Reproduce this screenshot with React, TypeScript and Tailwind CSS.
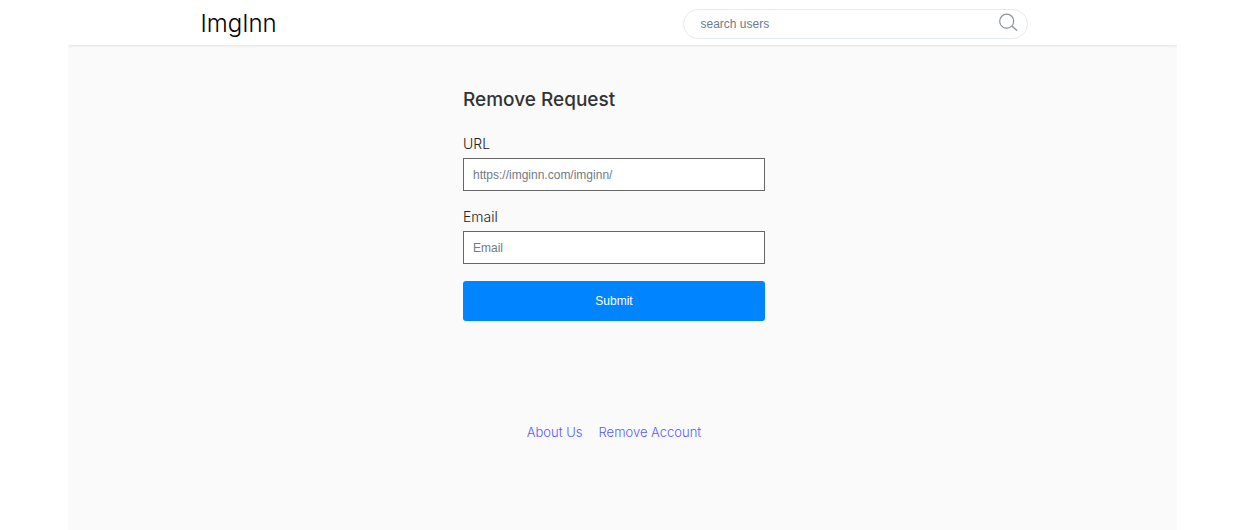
import { useState } from 'react';
import type { FormEvent } from 'react';

interface FieldProps {
  id: string;
  label: string;
  type: string;
  placeholder: string;
  value: string;
  onChange: (value: string) => void;
}

const footerLinks = [
  { label: 'About Us', href: '#about' },
  { label: 'Remove Account', href: '#remove' },
];

function SearchIcon() {
  return (
    <svg width="20" height="20" viewBox="0 0 20 20" fill="none" stroke="#8b9298" aria-hidden="true">
      <circle cx="8.7" cy="8.2" r="7" strokeWidth="1.2" />
      <path d="M14 13.3L19 17.5" strokeWidth="1.5" />
    </svg>
  );
}

function Header() {
  return (
    <header className="h-[45px] bg-white pr-[17px] shadow-[0_1px_3px_rgba(0,0,0,0.1)]">
      <div className="mx-auto flex h-full w-full max-w-[827px] items-center justify-between">
        <a href="#home" className="pt-[2px] font-[Inter,sans-serif] text-[24px] leading-7 font-light text-black">
          ImgInn
        </a>
        <form
          role="search"
          onSubmit={(e) => e.preventDefault()}
          className="mt-[3px] flex h-[30px] w-[345px] items-center rounded-full border border-[#e6ecf0] bg-white pr-[9px] pl-[17px]"
        >
          <input
            type="search"
            aria-label="search users"
            placeholder="search users"
            className="min-w-0 flex-1 bg-transparent text-[12px] leading-4 text-gray-700 outline-none placeholder:text-[#6f7b86]"
          />
          <button type="submit" aria-label="Search" className="pb-[2px]">
            <SearchIcon />
          </button>
        </form>
      </div>
    </header>
  );
}

function Field({ id, label, type, placeholder, value, onChange }: FieldProps) {
  return (
    <div>
      <label htmlFor={id} className="mb-1 block font-[Inter,sans-serif] text-[14px] leading-5 font-light text-[#222]">
        {label}
      </label>
      <input
        id={id}
        type={type}
        placeholder={placeholder}
        value={value}
        onChange={(e) => onChange(e.target.value)}
        className="block h-[33px] w-full border border-[#666] bg-white px-[9px] text-[12px] leading-4 text-gray-800 outline-none placeholder:text-[#6f7b86]"
      />
    </div>
  );
}

export default function App() {
  const [url, setUrl] = useState('');
  const [email, setEmail] = useState('');

  const handleSubmit = (e: FormEvent) => {
    e.preventDefault();
  };

  return (
    <div className="min-h-screen bg-white font-['Liberation_Sans',Arial,sans-serif]">
      <div className="mx-auto min-h-screen max-w-[1109px] overflow-hidden bg-[#fafafa]">
        <Header />
        <main className="pt-10 pr-[17px]">
          <form onSubmit={handleSubmit} className="mx-auto w-full max-w-[302px]">
            <h1 className="mb-5 pt-px font-[Inter,sans-serif] text-[19px] leading-7 font-medium text-[#333]">
              Remove Request
            </h1>
            <div className="flex flex-col gap-4">
              <Field
                id="url"
                label="URL"
                type="url"
                placeholder="https://imginn.com/imginn/"
                value={url}
                onChange={setUrl}
              />
              <Field
                id="email"
                label="Email"
                type="email"
                placeholder="Email"
                value={email}
                onChange={setEmail}
              />
            </div>
            <button type="submit" className="mt-[17px] h-10 w-full rounded-[3px] bg-[#0084ff] text-[12px] text-white">
              Submit
            </button>
          </form>
        </main>
        <footer className="mt-[101px] pr-[17px] pb-10">
          <nav className="flex justify-center gap-4">
            {footerLinks.map((link) => (
              <a
                key={link.href}
                href={link.href}
                className="font-[Inter,sans-serif] text-[13px] leading-5 font-light text-[#5a5aff]"
              >
                {link.label}
              </a>
            ))}
          </nav>
        </footer>
      </div>
    </div>
  );
}
